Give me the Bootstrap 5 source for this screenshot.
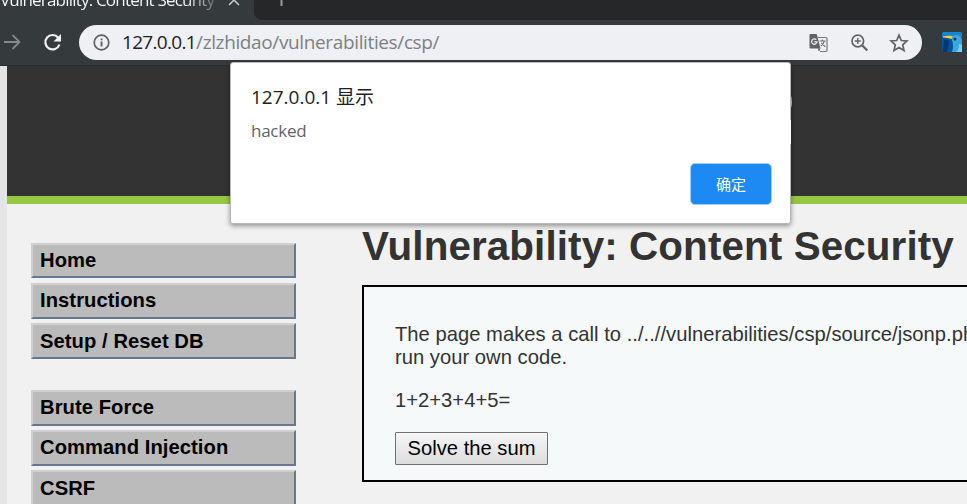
<!DOCTYPE html>
<html lang="zh-CN">
<head>
<meta charset="utf-8">
<meta name="viewport" content="width=device-width, initial-scale=1">
<title>Vulnerability: Content Security Policy</title>
<link href="https://cdn.jsdelivr.net/npm/bootstrap@5.3.0/dist/css/bootstrap.min.css" rel="stylesheet">
<style>
body{font:20.2px/23px "Liberation Sans",Arial,sans-serif;background:#f1f1f1;color:#333;height:504px}
.chrome-ui{font-family:"Open Sans","Noto Sans CJK SC",sans-serif}
.tab-strip{height:20px;background:#262729}
.active-tab{width:262px;height:20px;background:#353a3d}
.active-tab::after{content:"";position:absolute;left:254px;top:0;width:8px;height:20px;background:#262729;border-bottom-left-radius:8px}
.tab-title{width:217px;margin-top:-9px;padding-left:0;font-size:17px;line-height:17px;height:22px;letter-spacing:-.8px;color:transparent;background:linear-gradient(90deg,#fff 185px,#353a3d 225px);-webkit-background-clip:text;background-clip:text}
.tab-close{margin:-6px 0 0 11px}
.tool-bar{height:46px;background:#353a3d;border-bottom:1px solid #292c2e}
.omnibox{width:843px;height:35px;margin-left:15px;background:#eff0f3;border-radius:18px;padding-left:14px;padding-right:13px}
.address{margin-left:12px;font-size:19px;line-height:34px;letter-spacing:-.37px;color:#7c8084;margin-top:-1px}
.address b{font-weight:400;letter-spacing:-.68px;color:#202124}
.zoom-icon{margin-left:23px}
.star-icon{margin-left:20px}
.page-row{height:438px}
.left-edge{width:7px;background:#e4e4e4}
.masthead{height:138px;background:#333;border-bottom:8px solid #95c840}
.logo-arc{left:783px;top:92px;width:9px;height:20px;border-right:2px solid #c8c8c8;border-radius:50%}
.logo-bar{left:785px;top:120px;width:6px;height:24px;background:#fff;z-index:2}
.side-menu{width:265px;margin-left:24px;padding-top:39px}
.side-menu a{display:block;height:36px;line-height:31px;letter-spacing:.06px;padding-left:7px;margin-bottom:4px;font-weight:700;color:#000;text-decoration:none;background:#bbb;border:2px solid;border-color:#cfcfcf #65788e #65788e #cfcfcf}
.side-menu a:first-child{height:35px;margin-bottom:5px}
.side-menu a:nth-child(3),.side-menu a:last-child{line-height:32px}
.side-menu a.group-start{margin-top:31px}
.content-col{margin-left:66px;padding-top:17px}
.content-col h1{font-size:40.4px;letter-spacing:.1px;line-height:50px;font-weight:700;margin-bottom:14px}
.code-panel{width:605px;height:197px;border:2px solid #000;border-right:0;background:#f5f9fa;padding:36px 0 0 31px}
.code-panel p{margin-bottom:20px;letter-spacing:.02px}
.sum-btn{width:153px;height:33px;border:1px solid #707070;border-radius:1px;background:linear-gradient(#f6f6f6,#dcdcdc);color:#000;font-size:20.2px;line-height:29px}
.alert-box{left:230px;top:62px;width:561px;height:162px;background:#fff;border:1px solid #b8b8b8;border-radius:3px;box-shadow:0 2px 5px rgba(0,0,0,.4);padding:20px 18px 0 20px}
.alert-title{font-size:19px;line-height:28px;color:#202124}
.alert-text{font-size:17px;line-height:24px;margin-top:8px;letter-spacing:-.25px;color:#5f6368}
.ok-btn{width:82px;height:42px;margin-top:20px;border:1px solid #a3cdf8;border-radius:5px;background:#1d89f2;color:#fff;font-size:15px;line-height:40px}
</style>
<script src="https://cdn.jsdelivr.net/npm/bootstrap@5.3.0/dist/js/bootstrap.bundle.min.js"></script>
</head>
<body class="overflow-hidden position-relative">
<header class="chrome-ui">
  <div class="tab-strip d-flex overflow-hidden">
    <div class="active-tab d-flex position-relative">
      <div class="tab-title text-nowrap">Vulnerability: Content Security</div>
      <svg class="tab-close" width="12" height="12" viewBox="0 0 12 12" stroke="#c3c6c8" stroke-width="1.6"><path d="M1 1l10 10M11 1L1 11"/></svg>
    </div>
    <svg width="14" height="8" viewBox="0 0 14 8" class="ms-3" stroke="#9a9c9f" stroke-width="2"><path d="M3.5 0v6"/></svg>
  </div>
  <div class="tool-bar d-flex align-items-center">
    <svg width="64" height="24" viewBox="0 0 64 24" fill="none">
      <path d="M4 11h15M12.500 4l7 7-7 7" stroke="#85898b" stroke-width="1.800"/>
      <path d="M58.200 6.700A7.200 7.200 0 1 0 59.400 13.500" stroke="#f1f1f1" stroke-width="2.200"/>
      <path d="M61 3v7.500h-7.500z" fill="#f1f1f1"/>
    </svg>
    <div class="omnibox d-flex align-items-center">
      <svg width="17" height="17" viewBox="0 0 17 17"><circle cx="8.500" cy="8.500" r="7.300" fill="none" stroke="#5f6368" stroke-width="1.700"/><path d="M7.600 4.400h1.900v1.900H7.600zM7.600 7.600h1.900v5H7.600z" fill="#5f6368"/></svg>
      <div class="address text-nowrap"><b>127.0.0.1</b><span>/zlzhidao/vulnerabilities/csp/</span></div>
      <div class="d-flex align-items-center ms-auto">
        <svg width="19" height="20" viewBox="0 0 19 20"><path d="M9 4.500h8q1 0 1 1v12q0 1-1 1h-6" fill="none" stroke="#777b80" stroke-width="1.200"/><path d="M1.500 1h6.200l3.800 14.500h-10Q.5 15.500.5 14.500V2q0-1 1-1z" fill="#5f6368"/><path d="M8.500 15.500h3l-1.500 3z" fill="#5f6368"/><path d="M7.300 6.700A2.700 2.700 0 1 0 8 8.800H5.300" fill="none" stroke="#e9eaec" stroke-width="1.300"/><path d="M10.700 8h6M13.300 6.500V8M15.300 8q-.5 3-3.500 5M12.300 9.800l4 4" fill="none" stroke="#6b6f74" stroke-width="1.200"/></svg>
        <svg width="18" height="18" viewBox="0 0 18 18" class="zoom-icon" fill="none" stroke="#5f6368"><circle cx="6.800" cy="7" r="5.800" stroke-width="1.700"/><path d="M11.300 11.500l5 5" stroke-width="2.200"/><path d="M3.800 7h6M6.800 4v6" stroke-width="1.400"/></svg>
        <svg width="20" height="20" viewBox="0 0 20 20" class="star-icon"><path d="M10 2.200l2.300 5.300 5.700.5-4.300 3.800 1.300 5.600-5-3-5 3 1.300-5.600L2 8l5.700-.5z" fill="none" stroke="#5f6368" stroke-width="1.700"/></svg>
      </div>
    </div>
    <svg width="20" height="20" viewBox="0 0 20 20" style="margin:-2px 0 0 20px"><rect width="20" height="20" rx="2" fill="#07539b"/><path d="M0 2q0-2 2-2h16q2 0 2 2v3H0z" fill="#1687cf"/><path d="M10 20q2-6 0-12 0-5 5-5 5 1 5 6v11z" fill="#38a7e3"/><path d="M14 20q3-2 3-8l3 1v7z" fill="#7bcdf2"/><path d="M1 4.500q7-1.500 10 0L9.500 7Q6 5.500 1 5.500z" fill="#f3d33c"/><path d="M2 7q6 0 5 4l-2 9H1z" fill="#063873"/><circle cx="13" cy="7" r="1.500" fill="#092e50"/></svg>
  </div>
</header>

<div class="page-row d-flex overflow-hidden">
  <div class="left-edge flex-shrink-0"></div>
  <div class="flex-grow-1">
    <div class="masthead"><div class="logo-arc position-absolute"></div><div class="logo-bar position-absolute"></div></div>
    <div class="d-flex">
      <nav class="side-menu flex-shrink-0">
        <a href="#">Home</a>
        <a href="#">Instructions</a>
        <a href="#">Setup / Reset DB</a>
        <a href="#" class="group-start">Brute Force</a>
        <a href="#">Command Injection</a>
        <a href="#">CSRF</a>
      </nav>
      <main class="content-col">
        <h1 class="text-nowrap">Vulnerability: Content Security</h1>
        <section class="code-panel text-nowrap overflow-hidden">
          <p>The page makes a call to ../..//vulnerabilities/csp/source/jsonp.ph<br>run your own code.</p>
          <p>1+2+3+4+5=</p>
          <button type="button" class="sum-btn p-0">Solve the sum</button>
        </section>
      </main>
    </div>
  </div>
</div>

<div class="alert-box chrome-ui position-absolute d-flex flex-column" role="alertdialog">
  <div class="alert-title">127.0.0.1 显示</div>
  <div class="alert-text">hacked</div>
  <button type="button" class="ok-btn align-self-end p-0">确定</button>
</div>
</body>
</html>
